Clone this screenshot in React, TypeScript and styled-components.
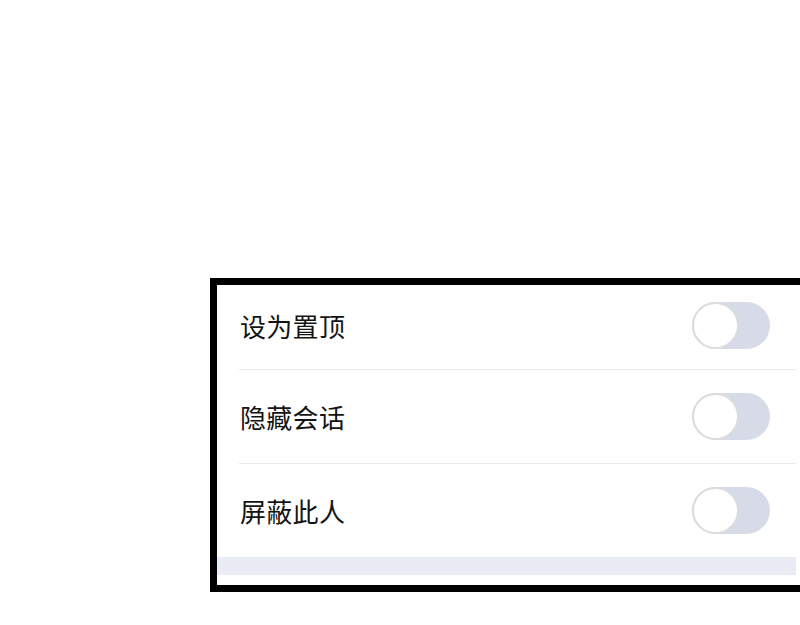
import styled, { createGlobalStyle } from 'styled-components';

const GlobalStyle = createGlobalStyle`
  html, body {
    margin: 0;
    padding: 0;
    background: #ffffff;
    overflow: hidden;
  }
  body {
    font-family: "Noto Sans CJK SC", "Noto Sans", sans-serif;
  }
`;

const Page = styled.div`
  width: 800px;
  height: 625px;
  padding: 278px 0 0 210px;
  box-sizing: border-box;
  overflow: hidden;
`;

const Frame = styled.div`
  width: 600px;
  border: 7px solid #000;
  background: #fff;
`;

const Panel = styled.div`
  width: 579px;
  display: flex;
  flex-direction: column;
`;

const Row = styled.div<{ $height: number; $lift?: number }>`
  height: ${(p) => p.$height}px;
  display: flex;
  align-items: center;
  justify-content: space-between;
  padding: 0 26px ${(p) => p.$lift ?? 0}px 23px;
  box-sizing: border-box;
`;

const Label = styled.span`
  font-size: 26px;
  color: #141414;
  letter-spacing: 0.3px;
`;

const Divider = styled.div`
  height: 1px;
  margin-left: 22px;
  background: #ebebeb;
`;

const Track = styled.div`
  width: 78px;
  height: 47px;
  border-radius: 24px;
  background: #d6dbe7;
  display: flex;
  align-items: center;
  box-sizing: border-box;
`;

const Knob = styled.div`
  width: 47px;
  height: 47px;
  border-radius: 50%;
  background: #fff;
  border: 2px solid #dcdcdc;
  box-sizing: border-box;
`;

const Band = styled.div`
  height: 18px;
  background: #e9ecf4;
`;

const Spacer = styled.div`
  height: 10px;
`;

const Toggle = () => (
  <Track>
    <Knob />
  </Track>
);

const items = ['设为置顶', '隐藏会话', '屏蔽此人'];

export default function App() {
  return (
    <>
      <GlobalStyle />
      <Page>
        <Frame>
          <Panel>
            {items.map((label, i) => (
              <div key={label}>
                <Row $height={i === 0 ? 84 : 93} $lift={i === 0 ? 4 : 0}>
                  <Label>{label}</Label>
                  <Toggle />
                </Row>
                {i < items.length - 1 && <Divider />}
              </div>
            ))}
            <Band />
            <Spacer />
          </Panel>
        </Frame>
      </Page>
    </>
  );
}
